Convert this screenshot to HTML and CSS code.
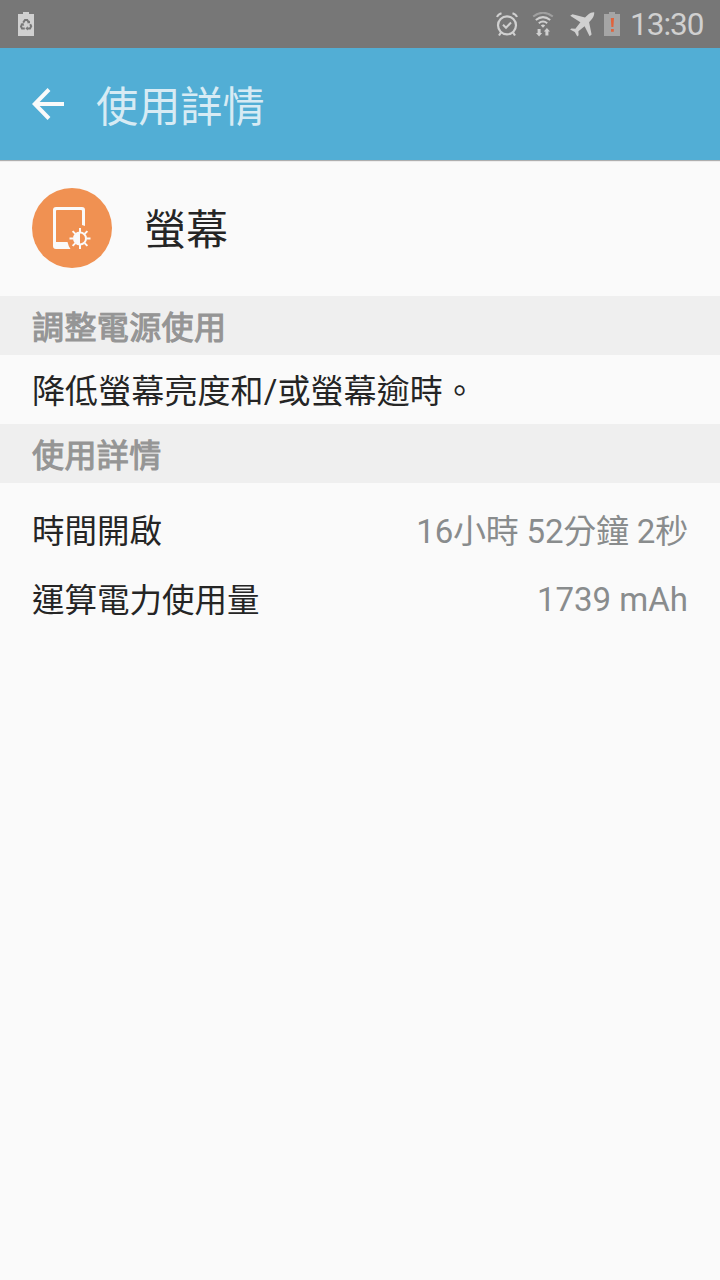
FILE: index.html
```
<!DOCTYPE html>
<html lang="zh-Hant-TW">
  <head>
    <meta charset="UTF-8" />
    <meta name="viewport" content="width=device-width, initial-scale=1" />
    <title>使用詳情</title>
    <link rel="stylesheet" href="styles.css">
  </head>
  <body>
    <div class="status-bar">
      <svg class="icon-saver" width="16" height="24" viewBox="0 0 16 24">
        <path d="M0 2h5V0h6v2h5v22H0z" fill="#d0d0d0" />
        <g fill="none" stroke="#777" stroke-width="2">
          <path d="M5.2 10.6 7 8h2.2l1.6 2.6" />
          <path d="M12.2 12.2l1 2-1.2 2.3H9.2" />
          <path d="M6.8 16.5H4l-1-2 1.3-2.6" />
        </g>
        <path d="M9 11.2h3V8.6zM9.8 14.2v4.4l-2.4-2.2zM2.2 12l3.2-.9.8 3z" fill="#777" />
      </svg>

      <div class="status-right">
        <svg width="22" height="25" viewBox="0 0 22 25" fill="none" stroke="#d0d0d0">
          <circle cx="11" cy="13.3" r="9" stroke-width="2.2" />
          <path d="M7 12.8l3 3 5-5.3" stroke-width="2" />
          <path d="M1 5Q2 2.2 5.5 1.2M21 5Q20 2.2 16.5 1.2" stroke-width="2" />
          <path d="M5 20.5l-2 3M17 20.5l2 3" stroke-width="2.2" />
        </svg>
        <svg class="icon-wifi" width="22" height="25" viewBox="0 0 22 25">
          <g fill="none" stroke="#d0d0d0" stroke-width="2">
            <path d="M1.2 4.5Q11-3 20.8 4.5" stroke="#a0a0a0" />
            <path d="M3.8 8Q11 2.3 18.2 8" />
            <path d="M6.8 11.2Q11 7.8 15.2 11.2" />
          </g>
          <path d="M8.8 13.4q2.2-1.800 4.400 0L11 15.800z" fill="#d0d0d0" />
          <path d="M5.600 17h3v4h1.600l-3.100 3.500L4 21h1.600zM13.400 23.500h3v-4H18l-3.100-3.600-3.100 3.600h1.600z" fill="#d0d0d0" />
        </svg>
        <svg class="icon-plane" width="25" height="25" viewBox="0 0 25 25">
          <path d="M24.200.3C22 .2 20 1 18.500 2.300L15 5.400 2.500 2.200.2 3.800l10.200 6.500-5 6.400-4-.3L.1 17.500l4.700 2.500 2.500 4.500 1.300-1.200-.2-4 6.200-5 5 10 2-1.800-2.500-12.300 3-3.500C23.700 4.800 24.400 2.500 24.200.3z" fill="#d0d0d0" />
        </svg>
        <svg class="icon-battery" width="16" height="24" viewBox="0 0 16 24">
          <path d="M0 2h5V0h6v2h5v22H0z" fill="#a5a5a5" />
          <path d="M6.800 6h3.200l-.6 9H7.400zM7 17h2.800v2.700H7z" fill="#e0633c" />
        </svg>
        <span class="clock">13:30</span>
      </div>
    </div>

    <header class="action-bar">
      <svg class="back" width="32" height="32" viewBox="0 0 32 32">
        <path d="M17 1.500 2.800 16 17 30.500M3 16h29" fill="none" stroke="#fafafa" stroke-width="4" />
      </svg>
      <h1>使用詳情</h1>
    </header>

    <main>
      <div class="app-row">
        <svg class="app-icon" width="80" height="80" viewBox="0 0 80 80">
          <circle cx="40" cy="40" r="40" fill="#f09152" />
          <path d="M24 19h26q3 0 3 3v16l-3-1V23q0-1-1-1H25q-1 0-1 1v31h11.500q1 4.500 3 7H24q-3 0-3-3V22q0-3 3-3z" fill="#fafafa" />
          <g fill="none" stroke="#fafafa" stroke-width="2">
            <circle cx="48" cy="50.500" r="6" />
            <path d="M48 44v-4M48 57v4M41.500 50.500h-4M54.500 50.500h4M43.400 45.900l-2.800-2.800M52.600 55.100l2.800 2.800M43.400 55.100l-2.800 2.800M52.600 45.900l2.800-2.800" />
          </g>
          <path d="M48 44.500a6 6 0 0 0 0 12z" fill="#fafafa" />
        </svg>
        <span class="app-name">螢幕</span>
      </div>

      <h2>調整電源使用</h2>
      <p class="tip">降低螢幕亮度和/或螢幕逾時。</p>

      <h2>使用詳情</h2>
      <dl class="details">
        <div class="detail">
          <dt>時間開啟</dt>
          <dd class="duration">16小時 52分鐘 2秒</dd>
        </div>
        <div class="detail">
          <dt>運算電力使用量</dt>
          <dd>1739 mAh</dd>
        </div>
      </dl>
    </main>
  </body>
</html>
```
FILE: styles.css
```
* {
  margin: 0;
  padding: 0;
  box-sizing: border-box;
}
body {
  min-height: 100vh;
  background: #fafafa;
  color: #252525;
  font-family: Roboto, "Noto Sans CJK TC", sans-serif;
  font-size: 33px;
}
svg {
  display: block;
  flex: none;
}

/* Status bar */
.status-bar {
  display: flex;
  align-items: center;
  justify-content: space-between;
  height: 48px;
  padding: 0 16px 0 18px;
  background: #777;
}
.status-right {
  display: flex;
  align-items: center;
}
.icon-wifi {
  margin-left: 14px;
}
.icon-plane {
  margin-left: 16px;
}
.icon-battery {
  margin-left: 9px;
}
.clock {
  width: 74px;
  margin-left: 10px;
  padding-top: 2px;
  color: #d0d0d0;
  font-size: 31.5px;
  letter-spacing: -1px;
  line-height: 48px;
}

/* Action bar */
.action-bar {
  position: relative;
  display: flex;
  align-items: center;
  height: 112px;
  padding: 0 32px;
  background: #52aed5;
  box-shadow: 0 1px 1px rgba(0, 0, 0, 0.3);
}
h1 {
  margin-left: 32px;
  padding-top: 7px;
  color: #d7ebf4;
  font-size: 42.2px;
  font-weight: 400;
  line-height: 105px;
}

/* Content */
.app-row {
  display: flex;
  align-items: center;
  height: 136px;
  padding: 0 32px;
}
.app-name {
  margin-left: 32px;
  padding-top: 6px;
  font-size: 42px;
  line-height: 80px;
}
h2 {
  height: 59px;
  padding: 0 32px;
  background: #efefef;
  color: #959595;
  font-size: 32px;
  font-weight: 400;
  letter-spacing: 0.4px;
  line-height: 64px;
  -webkit-text-stroke: 1.1px #959595;
}
.tip {
  height: 69px;
  padding: 0 32px;
  letter-spacing: 0.1px;
  line-height: 74px;
}
.details {
  padding: 14px 32px 13px;
}
.detail {
  display: flex;
  justify-content: space-between;
  height: 68px;
  line-height: 69px;
}
.detail + .detail dt {
  padding-top: 2px;
}
dt {
  padding-top: 1px;
  font-size: 32.5px;
}
dd {
  color: #898c8d;
}
.duration {
  letter-spacing: -0.2px;
}
```
